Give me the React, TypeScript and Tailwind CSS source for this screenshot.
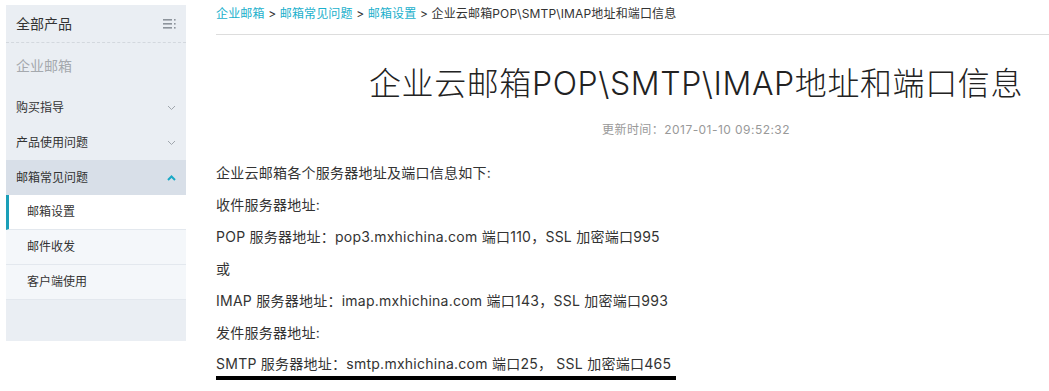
import React from "react";

const font = { fontFamily: '"Liberation Sans", "Noto Sans CJK SC", sans-serif' };
const mainFont = { fontFamily: 'Inter, "Noto Sans CJK SC", sans-serif' };

function ChevronDown() {
  return (
    <svg width="9" height="6" viewBox="0 0 9 6" className="block">
      <path d="M1 1 L4.5 4.5 L8 1" fill="none" stroke="#a0a6ad" strokeWidth="1" />
    </svg>
  );
}

function ChevronUp() {
  return (
    <svg width="9" height="6" viewBox="0 0 9 6" className="block">
      <path d="M1 5 L4.5 1.5 L8 5" fill="none" stroke="#19a9c6" strokeWidth="2" />
    </svg>
  );
}

function MenuIcon() {
  return (
    <svg width="13" height="10" viewBox="0 0 13 10" className="block">
      <rect x="0" y="0" width="9" height="1.6" fill="#8d949c" />
      <rect x="0" y="4" width="9" height="1.6" fill="#8d949c" />
      <rect x="0" y="8" width="9" height="1.6" fill="#8d949c" />
      <rect x="11" y="0" width="1.6" height="1.6" fill="#8d949c" />
      <rect x="11" y="4" width="1.6" height="1.6" fill="#8d949c" />
      <rect x="11" y="8" width="1.6" height="1.6" fill="#8d949c" />
    </svg>
  );
}

export default function App() {
  return (
    <div className="w-[1049px] h-[391px] overflow-hidden bg-white flex" style={font}>
      {/* Sidebar */}
      <div className="ml-[6px] mt-[5px] w-[180px] h-[336px] shrink-0 bg-[#eaeef3] flex flex-col">
        <div className="h-[38px] flex items-center justify-between pl-[10px] pr-[10px] pt-[1px] border-b border-dashed border-[#d3d8de]">
          <span className="text-[14px] text-[#333]">全部产品</span>
          <MenuIcon />
        </div>
        <div className="h-[47px] flex items-center pl-[10px]">
          <span className="text-[14px] text-[#a5a9ae]">企业邮箱</span>
        </div>
        <div className="h-[35px] flex items-center justify-between pl-[10px] pr-[10px]">
          <span className="text-[12px] text-[#333]">购买指导</span>
          <ChevronDown />
        </div>
        <div className="h-[35px] flex items-center justify-between pl-[10px] pr-[10px]">
          <span className="text-[12px] text-[#333]">产品使用问题</span>
          <ChevronDown />
        </div>
        <div className="h-[35px] flex items-center justify-between pl-[10px] pr-[10px] bg-[#d8dfe8]">
          <span className="text-[12px] text-[#333]">邮箱常见问题</span>
          <ChevronUp />
        </div>
        <div className="h-[35px] flex items-center pl-[18px] bg-white border-l-[3px] border-[#1a9fb8] border-b border-b-[#e3e8ee]">
          <span className="text-[12px] text-[#333]">邮箱设置</span>
        </div>
        <div className="h-[35px] flex items-center pl-[21px] bg-[#f4f7fa] border-b border-[#e3e8ee]">
          <span className="text-[12px] text-[#333]">邮件收发</span>
        </div>
        <div className="h-[35px] flex items-center pl-[21px] bg-[#f4f7fa] border-b border-[#e3e8ee]">
          <span className="text-[12px] text-[#333]">客户端使用</span>
        </div>
      </div>

      {/* Main */}
      <div className="ml-[30px] w-[960px] shrink-0 flex flex-col" style={mainFont}>
        <div className="h-[35px] pt-[6px] border-b border-[#dddddd] text-[12px] leading-[16px] tracking-[0.15px] text-[#333] whitespace-nowrap">
          <span className="text-[#1ab0cc]">企业邮箱</span>
          <span> &gt; </span>
          <span className="text-[#1ab0cc]">邮箱常见问题</span>
          <span> &gt; </span>
          <span className="text-[#1ab0cc]">邮箱设置</span>
          <span> &gt; </span>
          <span>企业云邮箱POP\SMTP\IMAP地址和端口信息</span>
        </div>
        <h1 className="mt-[29px] text-center text-[32px] leading-[40px] tracking-[0.6px] text-[#222] font-light whitespace-nowrap">
          企业云邮箱POP\SMTP\IMAP地址和端口信息
        </h1>
        <div className="mt-[18px] text-center text-[12px] leading-[16px] tracking-[0.45px] text-[#999]">
          更新时间：2017-01-10 09:52:32
        </div>
        <div className="mt-[19px] text-[14px] leading-[32px] tracking-[0.25px] text-[#333] whitespace-nowrap flex flex-col items-start">
          <p>企业云邮箱各个服务器地址及端口信息如下:</p>
          <p>收件服务器地址:</p>
          <p>POP 服务器地址：pop3.mxhichina.com 端口110，SSL 加密端口995</p>
          <p>或</p>
          <p>IMAP 服务器地址：imap.mxhichina.com 端口143，SSL 加密端口993</p>
          <p>发件服务器地址:</p>
          <p className="border-b-4 border-black pr-[5px] leading-[24px] mt-[3px]">
            SMTP 服务器地址：smtp.mxhichina.com 端口25， SSL 加密端口465
          </p>
        </div>
      </div>
    </div>
  );
}
